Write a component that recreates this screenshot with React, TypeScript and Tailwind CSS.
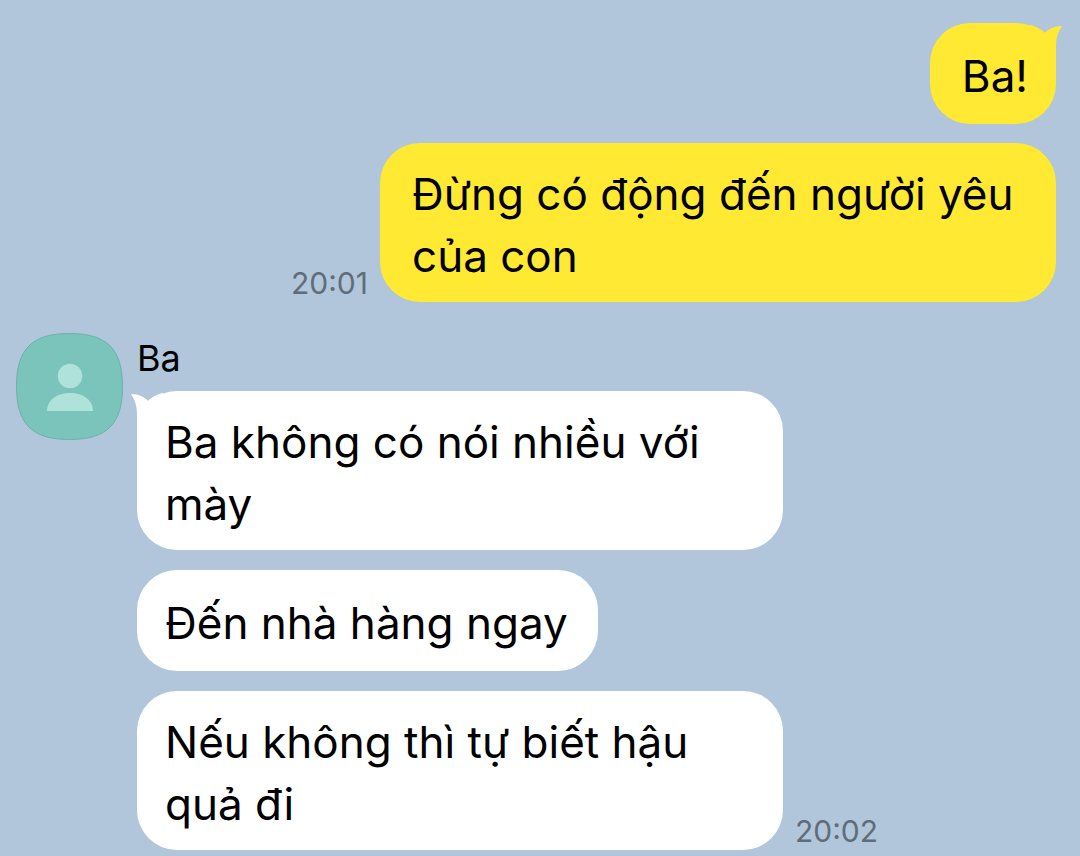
import type { ReactNode } from 'react';
import clsx from 'clsx';

type Side = 'sent' | 'received';

function Tail({ side }: { side: Side }) {
  const sent = side === 'sent';
  return (
    <svg
      aria-hidden="true"
      viewBox="0 0 32 40"
      className={clsx(
        'absolute top-0 h-10 w-8',
        sent ? '-right-1.5 text-[#ffe933]' : '-left-1.5 -scale-x-100 text-white',
      )}
    >
      <path
        fill="currentColor"
        d="M-6 .5 C3 1.6 10 5 15 9.8 C19 5.8 24.5 3.2 31 3 C31.9 3 32 3.6 31.5 4.2 C28 8.5 26 15 26 24 L26 40 L8 40 Z"
      />
    </svg>
  );
}

interface BubbleProps {
  side: Side;
  tail?: boolean;
  time?: string;
  children: ReactNode;
}

function Bubble({ side, tail = false, time, children }: BubbleProps) {
  const sent = side === 'sent';
  return (
    <li className={clsx('flex items-end gap-3', sent && 'flex-row-reverse')}>
      <div
        className={clsx(
          'relative flex min-h-[101px] items-center rounded-[40px] pt-5 pb-[15px]',
          sent ? 'max-w-[676px] bg-[#ffe933] pr-7 pl-8' : 'max-w-[646px] bg-white pr-[30px] pl-7',
        )}
      >
        {tail && <Tail side={side} />}
        <p className="relative text-[44px] leading-[62px]">{children}</p>
      </div>
      {time && <time className="shrink-0 text-[30px] leading-[38px] text-[#5f6d7b]">{time}</time>}
    </li>
  );
}

function Avatar() {
  return (
    <svg aria-hidden="true" viewBox="0 0 107 107" className="size-[107px] shrink-0">
      <path
        d="M53.5 .5 C91 .5 106.5 16 106.5 53.5 C106.5 91 91 106.5 53.5 106.5 C16 106.5 .5 91 .5 53.5 C.5 16 16 .5 53.5 .5 Z"
        fill="#7ac4bb"
        stroke="#6bb0ab"
      />
      <circle cx="54" cy="43" r="12.2" fill="#b0e2dc" />
      <path d="M31 78 C31 67 41 60 54 60 C67 60 77 67 77 78 Z" fill="#b0e2dc" />
    </svg>
  );
}

export default function App() {
  return (
    <main className="flex min-h-screen flex-col gap-[31px] bg-[#b1c6da] pt-[23px] pr-6 pb-1.5 pl-4 font-['Inter',sans-serif] text-black">
      <ul className="flex flex-col gap-[19px]">
        <Bubble side="sent" tail>
          Ba!
        </Bubble>
        <Bubble side="sent" time="20:01">
          Đừng có động đến người yêu của con
        </Bubble>
      </ul>

      <section className="flex items-start gap-3.5">
        <Avatar />
        <div className="flex min-w-0 flex-1 flex-col gap-2">
          <h2 className="text-4xl leading-[50px] font-normal">Ba</h2>
          <ul className="flex flex-col gap-5">
            <Bubble side="received" tail>
              Ba không có nói nhiều với mày
            </Bubble>
            <Bubble side="received">Đến nhà hàng ngay</Bubble>
            <Bubble side="received" time="20:02">
              Nếu không thì tự biết hậu quả đi
            </Bubble>
          </ul>
        </div>
      </section>
    </main>
  );
}
